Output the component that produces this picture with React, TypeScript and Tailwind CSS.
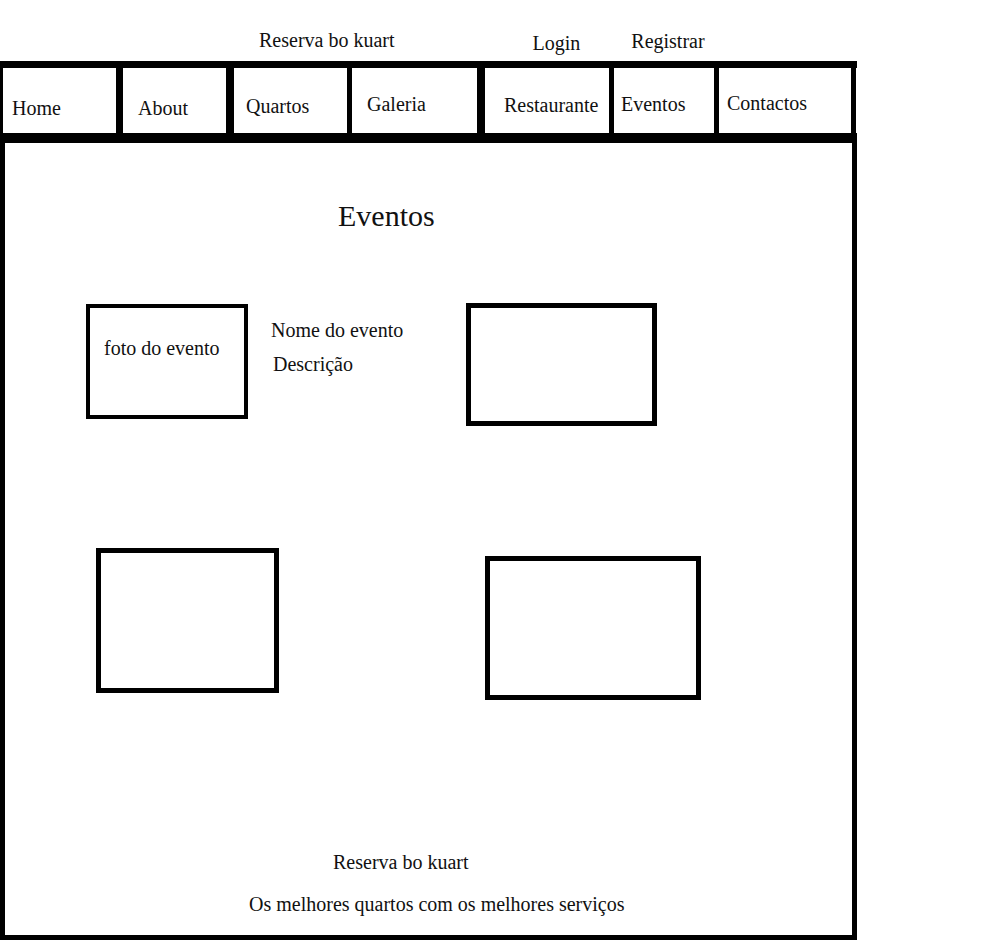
const navItems = [
  { label: 'Home', w: 'w-[120px]', border: 'border-r-[7px]', pad: 'pt-[28px] pl-[9px]' },
  { label: 'About', w: 'w-[111px]', border: 'border-r-[8px]', pad: 'pt-[28px] pl-[15px]' },
  { label: 'Quartos', w: 'w-[118px]', border: 'border-r-[5px]', pad: 'pt-[26px] pl-[12px]' },
  { label: 'Galeria', w: 'w-[133px]', border: 'border-r-[8px]', pad: 'pt-[24px] pl-[15px]' },
  { label: 'Restaurante', w: 'w-[129px]', border: 'border-r-[5px]', pad: 'pt-[25px] pl-[19px]' },
  { label: 'Eventos', w: 'w-[105px]', border: 'border-r-[5px]', pad: 'pt-[24px] pl-[7px]' },
  { label: 'Contactos', w: 'w-[137px]', border: 'border-r-[5px]', pad: 'pt-[23px] pl-[8px]' },
];

export default function App() {
  return (
    <div className="w-[1004px] h-[942px] bg-white text-[#111] text-[20px] leading-[24px] font-['Liberation_Serif',serif] overflow-hidden">
      {/* Top links */}
      <div className="flex h-[61px] items-start">
        <span className="ml-[259px] mt-[28px]">Reserva bo kuart</span>
        <span className="ml-[138px] mt-[31px]">Login</span>
        <span className="ml-[51px] mt-[29px]">Registrar</span>
      </div>

      {/* Nav */}
      <nav className="flex w-[857px] h-[82px] border-t-[7px] border-b-[10px] border-l-[3px] border-black">
        {navItems.map((item) => (
          <div key={item.label} className={`${item.w} ${item.border} ${item.pad} shrink-0 border-black whitespace-nowrap`}>
            {item.label}
          </div>
        ))}
      </nav>

      {/* Main content box */}
      <main className="w-[857px] h-[797px] pt-[55px] border-l-[5px] border-r-[5px] border-b-[5px] border-black">
        <h1 className="ml-[333px] text-[30px] leading-[36px]">Eventos</h1>

        <div className="flex items-start mt-[69px]">
          <div className="ml-[81px] mt-px w-[162px] h-[115px] border-4 border-black pt-[28px] pl-[14px] whitespace-nowrap">
            foto do evento
          </div>
          <div className="w-[195px] ml-[23px] mt-[15px] flex flex-col gap-[10px]">
            <span>Nome do evento</span>
            <span className="ml-[2px]">Descrição</span>
          </div>
          <div className="w-[191px] h-[123px] border-[5px] border-black" />
        </div>

        <div className="flex items-start mt-[122px]">
          <div className="ml-[91px] w-[183px] h-[145px] border-[5px] border-black" />
          <div className="ml-[206px] mt-[8px] w-[216px] h-[144px] border-[5px] border-black" />
        </div>

        <footer className="flex flex-col items-start mt-[150px]">
          <span className="ml-[328px]">Reserva bo kuart</span>
          <span className="ml-[244px] mt-[18px]">Os melhores quartos com os melhores serviços</span>
        </footer>
      </main>
    </div>
  );
}
